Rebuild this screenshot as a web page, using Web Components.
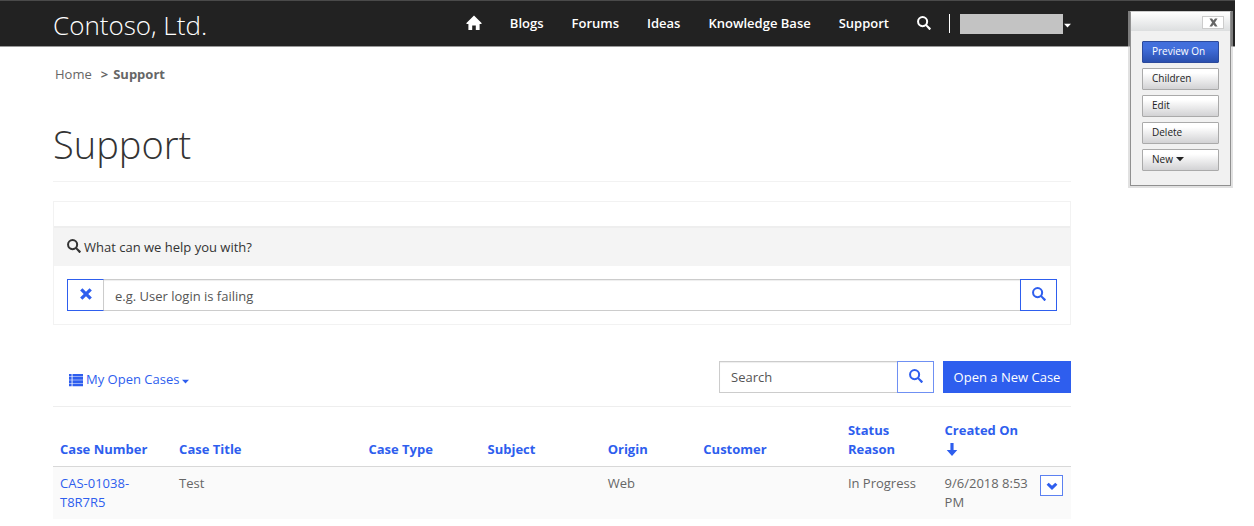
<!DOCTYPE html>
<html lang="en">
<head>
<meta charset="utf-8">
<title>Support - Contoso, Ltd.</title>
<style>
  :root {
    --blue: #2e5eee;
    --text: #666;
    --dark: #333;
    --line: #f2f2f2;
  }
  body {
    margin: 0;
    padding-right: 19px;
    background: #fff;
    color: var(--dark);
    font: 13px/19px "Open Sans", "Noto Sans", sans-serif;
  }
  main { padding: 0 164px 0 53px; }
</style>
</head>
<body>
<site-header brand="Contoso, Ltd."></site-header>
<main>
  <bread-crumb current="Support"><a href="#home">Home</a></bread-crumb>
  <page-title>Support</page-title>
  <help-search>What can we help you with?</help-search>
  <case-toolbar></case-toolbar>
  <case-table></case-table>
</main>
<edit-panel></edit-panel>

<script>
const define = (name, html, setup) => {
  const template = document.createElement('template');
  template.innerHTML = html;
  customElements.define(name, class extends HTMLElement {
    constructor() {
      super();
      this.attachShadow({ mode: 'open' }).append(template.content.cloneNode(true));
    }
    connectedCallback() {
      if (setup) setup(this, this.shadowRoot);
    }
  });
};

const ICONS = {
  home: '<path d="M8 .6 15.8 8.3 15.2 9H13.6V15H9.8V10.6H6.2V15H2.4V9H.8L.2 8.3Z"/>',
  search: '<circle cx="6.4" cy="6.4" r="5.2" fill="none" stroke="currentColor" stroke-width="2.3"/><path d="M9.4 10.9 10.9 9.4 15.6 13.7Q16.2 14.3 15.6 14.9L14.9 15.6Q14.3 16.2 13.7 15.6Z"/>',
  remove: '<path d="M3.9 1.3 8 5.4 12.1 1.3 14.7 3.9 10.6 8 14.7 12.1 12.1 14.7 8 10.6 3.9 14.7 1.3 12.1 5.4 8 1.3 3.9Z"/>',
  list: '<path d="M0 1H3V4H0ZM4 1H16V4H4ZM0 4.7H3V7.6H0ZM4 4.7H16V7.6H4ZM0 8.4H3V11.3H0ZM4 8.4H16V11.3H4ZM0 12H3V15H0ZM4 12H16V15H4Z"/>',
  arrow: '<path d="M6.2 .5H9.8V8.5H14L8 15.5 2 8.5H6.2Z"/>',
  chevron: '<path d="M3.6 3.6 8 7.7 12.4 3.6 15.2 6.4 8 13.2 .8 6.4Z"/>',
  close: '<path d="M.8 1H5.4L8 4.4 10.6 1H15.2L10.6 8 15.2 15H10.6L8 11.6 5.4 15H.8L5.4 8Z"/>',
  caret: '<path d="M0 4H16L8 12.5Z"/>'
};

define('ui-icon', `
  <style>
    :host { display: inline-block; flex: none; width: 14px; height: 14px; }
    svg { display: block; width: 100%; height: 100%; fill: currentColor; }
  </style>
  <svg viewBox="0 0 16 16" aria-hidden="true"></svg>`,
  (el, root) => { root.querySelector('svg').innerHTML = ICONS[el.getAttribute('name')]; });

define('site-header', `
  <style>
    :host { display: block; background: #222; border-top: 1px solid #4a4a4a; border-bottom: 1px solid #999; }
    .bar { display: flex; align-items: center; justify-content: space-between; height: 45px; padding: 0 164px 0 53px; color: #fff; }
    a { color: inherit; text-decoration: none; }
    .brand { padding-top: 2px; font-size: 26px; line-height: 36px; font-weight: 300; }
    nav { display: flex; align-items: center; gap: 28px; font-weight: 600; white-space: nowrap; }
    nav a { display: flex; }
    .home ui-icon { width: 16px; height: 16px; margin-bottom: 2px; }
    .find ui-icon { margin-bottom: 2px; }
    .account { display: flex; align-items: center; gap: 10px; margin-left: -10px; }
    .rule { width: 1px; height: 19px; background: #fff; }
    button { display: flex; align-items: center; gap: 1px; padding: 0; border: 0; background: none; color: #fff; }
    .name { width: 103px; height: 20px; background: #c3c3c3; }
    button ui-icon { width: 7px; height: 7px; margin-top: 4px; }
  </style>
  <div class="bar">
    <a class="brand" href="#"></a>
    <nav>
      <a class="home" href="#home" aria-label="Home"><ui-icon name="home"></ui-icon></a>
      <a href="#blogs">Blogs</a>
      <a href="#forums">Forums</a>
      <a href="#ideas">Ideas</a>
      <a href="#kb">Knowledge Base</a>
      <a href="#support">Support</a>
      <a class="find" href="#search" aria-label="Search"><ui-icon name="search"></ui-icon></a>
      <div class="account">
        <span class="rule"></span>
        <button type="button" aria-label="Account"><span class="name"></span><ui-icon name="caret"></ui-icon></button>
      </div>
    </nav>
  </div>`,
  (el, root) => { root.querySelector('.brand').textContent = el.getAttribute('brand'); });

define('bread-crumb', `
  <style>
    :host { display: flex; gap: 9px; padding: 18px 0 0 2px; color: var(--text); }
    ::slotted(a) { color: inherit; text-decoration: none; }
    b { font-weight: 700; display: flex; gap: 5px; }
  </style>
  <slot></slot><b><span>&gt;</span><span class="current"></span></b>`,
  (el, root) => { root.querySelector('.current').textContent = el.getAttribute('current'); });

define('page-title', `
  <style>
    :host { display: block; margin: 33px 0 19px; padding-bottom: 10px; border-bottom: 1px solid var(--line); }
    h1 { margin: 0; font-size: 38px; line-height: 54px; font-weight: 300; }
  </style>
  <h1><slot></slot></h1>`);

define('help-search', `
  <style>
    :host { display: block; border: 1px solid var(--line); }
    .top { height: 24px; border-bottom: 2px solid #eee; }
    label { display: flex; align-items: center; gap: 3px; height: 38px; padding: 0 13px; background: #f4f4f4; }
    label ui-icon { margin-bottom: 2px; }
    form { display: flex; padding: 13px; }
    input { flex: 1; min-width: 0; box-sizing: border-box; height: 32px; padding: 2px 11px 0; border: 1px solid #ccc; border-width: 1px 0; font: inherit; box-shadow: inset 0 1px 1px #eee; border-radius: 0; }
    input::placeholder { color: #555; opacity: 1; }
    button { display: flex; align-items: center; justify-content: center; box-sizing: border-box; width: 37px; height: 32px; padding: 0 0 2px; border: 1px solid var(--blue); background: #fff; color: var(--blue); }
    .clear { border-right-color: #ccc; }
  </style>
  <div class="top"></div>
  <label for="q"><ui-icon name="search"></ui-icon><span><slot></slot></span></label>
  <form>
    <button class="clear" type="reset" aria-label="Clear"><ui-icon name="remove"></ui-icon></button>
    <input id="q" type="text" placeholder="e.g. User login is failing">
    <button type="button" aria-label="Search"><ui-icon name="search"></ui-icon></button>
  </form>`);

define('case-toolbar', `
  <style>
    :host { display: flex; align-items: flex-start; gap: 9px; padding: 36px 0 13px; border-bottom: 1px solid #eee; }
    a { color: var(--blue); text-decoration: none; }
    .view { display: flex; align-items: center; gap: 3px; margin: 9px auto 0 16px; }
    .view ui-icon:last-child { width: 7px; height: 7px; margin-top: 3px; }
    .search { display: flex; }
    input { box-sizing: border-box; width: 178px; height: 32px; padding: 0 11px; border: 1px solid #ccc; border-right: 0; border-radius: 0; font: inherit; box-shadow: inset 0 1px 1px #eee; }
    input::placeholder { color: #555; opacity: 1; }
    button { display: flex; align-items: center; justify-content: center; box-sizing: border-box; width: 37px; height: 32px; padding: 0 0 2px; border: 1px solid #6f90f3; background: #fff; color: var(--blue); }
    .new { display: flex; align-items: center; justify-content: center; box-sizing: border-box; min-width: 128px; height: 32px; background: var(--blue); color: #fff; white-space: nowrap; }
  </style>
  <a class="view" href="#views"><ui-icon name="list"></ui-icon><span>My Open Cases</span><ui-icon name="caret"></ui-icon></a>
  <div class="search">
    <input type="text" placeholder="Search" aria-label="Search cases">
    <button type="button" aria-label="Search"><ui-icon name="search"></ui-icon></button>
  </div>
  <a class="new" href="#new">Open a New Case</a>`);

define('case-table', `
  <style>
    :host { display: block; padding-top: 7px; color: var(--text); }
    table { width: 100%; table-layout: fixed; border-collapse: separate; border-spacing: 0; }
    th, td { padding: 7px 2px 7px 7px; text-align: left; }
    th { vertical-align: bottom; font-weight: 700; border-bottom: 1px solid #d8d8d8; }
    td { vertical-align: top; background: #fafafa; }
    a { color: var(--blue); text-decoration: none; }
    th ui-icon { display: block; height: 15px; margin: 2px 0; }
    button { display: flex; align-items: center; justify-content: center; box-sizing: border-box; width: 23px; height: 21px; margin: 1px 0 0; padding: 0; border: 1px solid #5c81f1; background: #fff; color: var(--blue); }
    button ui-icon { width: 12px; height: 12px; }
  </style>
  <table>
    <colgroup>
      <col style="width:11.7%"><col style="width:18.6%"><col style="width:11.7%"><col style="width:11.8%"><col style="width:9.4%"><col style="width:14.2%"><col style="width:9.5%"><col style="width:9.4%"><col>
    </colgroup>
    <thead>
      <tr>
        <th><a href="#number">Case Number</a></th>
        <th><a href="#title">Case Title</a></th>
        <th><a href="#type">Case Type</a></th>
        <th><a href="#subject">Subject</a></th>
        <th><a href="#origin">Origin</a></th>
        <th><a href="#customer">Customer</a></th>
        <th><a href="#status">Status Reason</a></th>
        <th><a href="#created">Created On<ui-icon name="arrow"></ui-icon></a></th>
        <th></th>
      </tr>
    </thead>
    <tbody>
      <tr>
        <td><a href="#case">CAS-01038-T8R7R5</a></td>
        <td>Test</td>
        <td></td>
        <td></td>
        <td>Web</td>
        <td></td>
        <td>In Progress</td>
        <td>9/6/2018 8:53 PM</td>
        <td><button type="button" aria-label="Actions"><ui-icon name="chevron"></ui-icon></button></td>
      </tr>
    </tbody>
  </table>`);

define('edit-panel', `
  <style>
    :host { position: absolute; top: 11px; right: 21px; width: 101px; border: 2px solid rgba(200, 200, 200, .55); border-top: 0; }
    .box { border: 1px solid #909090; border-top-color: #ccc; background: #f1f1f1; }
    header { display: flex; justify-content: flex-end; padding: 4px 6px 2px; background: linear-gradient(#fff, #dcdedf); }
    header button { display: flex; align-items: center; justify-content: center; box-sizing: border-box; width: 22px; height: 13px; padding: 0; border: 1px solid #ccc; background: #fff; color: #666; }
    header ui-icon { width: 9px; height: 9px; }
    .list { display: flex; flex-direction: column; gap: 5px; padding: 10px 11px 14px; }
    .list button { display: flex; align-items: center; gap: 3px; box-sizing: border-box; height: 22px; padding: 0 9px 2px; border: 1px solid #aaa; border-radius: 1px; background: linear-gradient(#fff 20%, #d2d2d4); color: #222; font: 10px/14px "Open Sans", "Noto Sans", sans-serif; }
    .list .on { border-color: #2c4a9c; background: linear-gradient(#426fdc 30%, #2a4fae); color: #fff; }
    .list ui-icon { width: 8px; height: 8px; }
  </style>
  <div class="box">
    <header><button type="button" aria-label="Close"><ui-icon name="close"></ui-icon></button></header>
    <div class="list">
      <button type="button" class="on">Preview On</button>
      <button type="button">Children</button>
      <button type="button">Edit</button>
      <button type="button">Delete</button>
      <button type="button">New<ui-icon name="caret"></ui-icon></button>
    </div>
  </div>`);
</script>
</body>
</html>
